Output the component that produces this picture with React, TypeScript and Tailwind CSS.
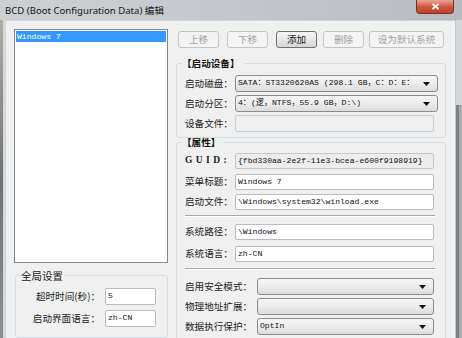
import React from "react";

const CJK = "font-['Noto_Sans_CJK_SC',sans-serif]";
const MONO = "font-['Liberation_Mono','Noto_Sans_CJK_SC',monospace]";

function Btn({ label, w, enabled, className = "" }: { label: string; w: number; enabled?: boolean; className?: string }) {
  return (
    <div
      style={{ width: w }}
      className={`h-[17px] shrink-0 rounded-[3px] border flex items-center justify-center ${CJK} text-[9.6px] leading-none ${
        enabled
          ? "border-[#707070] bg-gradient-to-b from-[#f4f4f4] via-[#e8e8e8] to-[#d6d6d6] text-[#1c1c1c]"
          : "border-[#c2c5c9] bg-[#f4f4f4] text-[#a3a3a3]"
      } ${className}`}
    >
      {label}
    </div>
  );
}

function Arrow() {
  return (
    <svg width="7" height="4" viewBox="0 0 7 4" className="shrink-0">
      <path d="M0 0H7L3.5 4Z" fill="#111" />
    </svg>
  );
}

function Combo({ text, w }: { text?: string; w: number }) {
  return (
    <div
      style={{ width: w }}
      className="h-[17px] shrink-0 rounded-[3px] border border-[#8a8d90] bg-gradient-to-b from-[#f6f6f6] via-[#ececec] to-[#dcdcdc] flex items-center pl-[2px] pr-[7px] overflow-hidden"
    >
      <span className={`${MONO} text-[8.1px] text-[#111] whitespace-nowrap flex-1`}>{text}</span>
      <Arrow />
    </div>
  );
}

function Input({ text, w, h = 16, tone = "white" }: { text?: string; w: number; h?: number; tone?: "white" | "ro" | "off" }) {
  const bg = tone === "white" ? "bg-white border-[#b8bcc1]" : tone === "ro" ? "bg-[#ededed] border-[#c4c7cb]" : "bg-[#f0f0f0] border-[#c9ccd0]";
  return (
    <div style={{ width: w, height: h }} className={`shrink-0 rounded-[2px] border ${bg} flex items-center pl-[2px] overflow-hidden`}>
      <span className={`${MONO} text-[8.1px] text-[#111] whitespace-nowrap`}>{text}</span>
    </div>
  );
}

function Label({ text, w }: { text: string; w: number }) {
  return (
    <div style={{ width: w }} className={`shrink-0 ${CJK} text-[9.6px] leading-none text-[#222] whitespace-nowrap`}>
      {text}
    </div>
  );
}

function Sep() {
  return <div className="h-[2px] w-[250px] border-t border-[#a6a6a6] border-b border-b-white" />;
}

export default function App() {
  return (
    <div className="w-[462px] h-[338px] overflow-hidden flex flex-col bg-[#f0f0f0]">
      {/* title bar */}
      <div className="h-[20px] shrink-0 flex items-start bg-gradient-to-r from-[#cdd0d3] via-[#c4c8cc] to-[#b8bcc0]">
        <span className="font-['Noto_Sans',sans-serif] text-[9.6px] leading-[20px] pl-[5px] text-[#141414] whitespace-nowrap">
          BCD (Boot Configuration Data) <span className={CJK}>编辑</span>
        </span>
        <div className="ml-auto mr-[8px] w-[38px] h-[14px] rounded-b-[4px] border border-t-0 border-[#7a3328] bg-gradient-to-b from-[#e9a796] via-[#cf5a44] to-[#c0402a] flex items-center justify-center">
          <svg width="9" height="7" viewBox="0 0 9 7">
            <path d="M1.5 1L7.5 6M7.5 1L1.5 6" stroke="white" strokeWidth="1.8" />
          </svg>
        </div>
      </div>

      <div className="flex flex-1 min-h-0">
        {/* left frame */}
        <div className="w-[5px] shrink-0 flex">
          <div className="w-[3px] bg-gradient-to-b from-[#b3aca2] via-[#707275] to-[#8b8d90]" />
          <div className="w-[2px] bg-[#d6d9dc]" />
        </div>

        {/* client */}
        <div className="w-[450px] shrink-0 flex bg-[#f0f0f0] border-t border-l border-[#d2d5d8]">
          {/* left column */}
          <div className="pl-[8px] pt-[8px] w-[162px] shrink-0 flex flex-col">
            <div className="h-[241px] w-[154px] border border-[#828790] bg-white pt-[1px] px-[1px]">
              <div className={`h-[11px] bg-[#3399ff] pl-[1px] ${MONO} text-[8.1px] leading-[11px] text-white`}>Windows 7</div>
            </div>
            <fieldset className="mt-[7px] ml-[1px] w-[153px] border border-[#d5dde3] rounded-[3px] pl-[4px] pt-[6px] h-[70px]">
              <legend className={`${CJK} text-[10.5px] leading-[12px] text-[#1a1a1a] px-[1px]`}>全局设置</legend>
              <div className="flex items-center h-[17px]">
                <div className={`w-[80px] text-right ${CJK} text-[9.6px] leading-none text-[#222]`}>超时时间(秒)：</div>
                <div className="ml-[5px]">
                  <Input text="5" w={51} h={17} />
                </div>
              </div>
              <div className="flex items-center h-[17px] mt-[5px]">
                <div className={`w-[80px] text-right ${CJK} text-[9.6px] leading-none text-[#222]`}>启动界面语言：</div>
                <div className="ml-[5px]">
                  <Input text="zh-CN" w={51} h={17} />
                </div>
              </div>
            </fieldset>
          </div>

          {/* right column */}
          <div className="ml-[8px] w-[270px] shrink-0 pt-[10px] flex flex-col">
            <div className="flex pl-[2px]">
              <Btn label="上移" w={41} />
              <Btn label="下移" w={41} className="ml-[8px]" />
              <Btn label="添加" w={41} enabled className="ml-[8px]" />
              <Btn label="删除" w={41} className="ml-[6px]" />
              <Btn label="设为默认系统" w={75} className="ml-[5px]" />
            </div>

            <fieldset className="mt-[10px] border border-[#d5dde3] rounded-[3px] pl-[5px] pt-[7px] pb-[5px]">
              <legend className={`${CJK} font-bold text-[9.6px] leading-[10px] text-[#111] pr-[4px]`}>【启动设备】</legend>
              <div className="pl-[3px] flex flex-col gap-[3px]">
                <div className="flex items-center">
                  <Label text="启动磁盘：" w={50} />
                  <Combo text="SATA：ST3320620AS (298.1 GB，C：D：E：" w={203} />
                </div>
                <div className="flex items-center">
                  <Label text="启动分区：" w={50} />
                  <Combo text="4：(逻，NTFS，55.9 GB，D:\)" w={203} />
                </div>
                <div className="flex items-center">
                  <Label text="设备文件：" w={50} />
                  <Input w={199} h={17} tone="off" />
                </div>
              </div>
            </fieldset>

            <fieldset className="-mt-[1px] border border-[#d5dde3] rounded-[3px] pl-[5px] pt-[6px] pb-[10px]">
              <legend className={`${CJK} font-bold text-[9.6px] leading-[10px] text-[#111] pr-[4px]`}>【属性】</legend>
              <div className="pl-[3px] flex flex-col">
                <div className="flex items-center">
                  <div className="w-[50px] shrink-0 font-['Liberation_Serif',serif] font-bold text-[9.5px] tracking-[3.4px] text-[#222] leading-none">
                    GUID:
                  </div>
                  <Input text="{fbd330aa-2e2f-11e3-bcea-e600f9198919}" w={199} tone="ro" />
                </div>
                <div className="flex items-center mt-[5px]">
                  <Label text="菜单标题：" w={50} />
                  <Input text="Windows 7" w={199} />
                </div>
                <div className="flex items-center mt-[4px]">
                  <Label text="启动文件：" w={50} />
                  <Input text="\Windows\system32\winload.exe" w={199} />
                </div>
                <div className="mt-[5px]">
                  <Sep />
                </div>
                <div className="flex items-center mt-[7px]">
                  <Label text="系统路径：" w={50} />
                  <Input text="\Windows" w={199} />
                </div>
                <div className="flex items-center mt-[6px]">
                  <Label text="系统语言：" w={50} />
                  <Input text="zh-CN" w={199} />
                </div>
                <div className="mt-[6px]">
                  <Sep />
                </div>
                <div className="flex items-center mt-[8px]">
                  <Label text="启用安全模式：" w={72} />
                  <Combo w={177} />
                </div>
                <div className="flex items-center mt-[3px]">
                  <Label text="物理地址扩展：" w={72} />
                  <Combo w={177} />
                </div>
                <div className="flex items-center mt-[3px]">
                  <Label text="数据执行保护：" w={72} />
                  <Combo text="OptIn" w={177} />
                </div>
              </div>
            </fieldset>
          </div>
        </div>

        {/* right frame */}
        <div className="flex-1 flex flex-col">
          <div className="h-[85px] bg-[#d4d7da] border-l border-[#c4c8cc]" />
          <div className="flex-1 flex">
            <div className="w-[1px] bg-[#c4c8cc]" />
            <div className="w-[3px] bg-[#7c7f83]" />
            <div className="flex-1 bg-[#a9acaf]" />
          </div>
        </div>
      </div>
    </div>
  );
}
